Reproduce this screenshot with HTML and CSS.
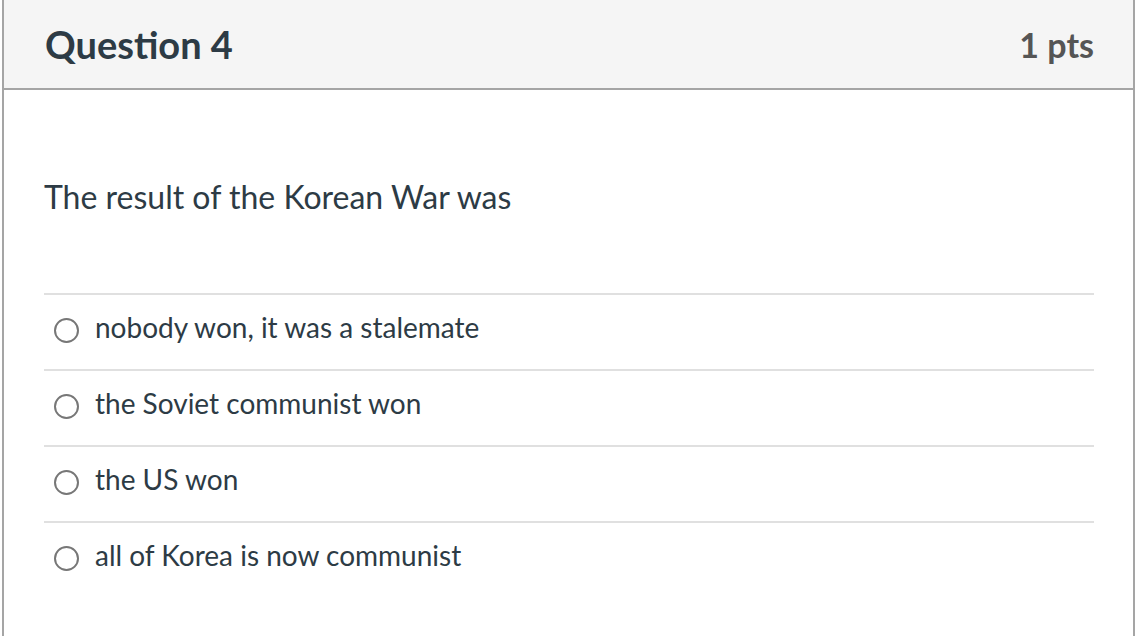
FILE: index.html
```html
<!DOCTYPE html>
<html>
<head>
<meta charset="utf-8">
<link rel="stylesheet" href="styles.css">
</head>
<body>
<div class="question">
  <div class="header">
    <span class="title">Question 4</span>
    <span class="pts">1 pts</span>
  </div>
  <div class="content">
    <div class="text">The result of the Korean War was</div>
    <div class="answers">
      <div class="answer"><span class="radio"></span><span class="label">nobody won, it was a stalemate</span></div>
      <div class="answer"><span class="radio"></span><span class="label">the Soviet communist won</span></div>
      <div class="answer"><span class="radio"></span><span class="label">the US won</span></div>
      <div class="answer"><span class="radio"></span><span class="label">all of Korea is now communist</span></div>
    </div>
  </div>
</div>
</body>
</html>
```
FILE: styles.css
```css
html, body {
  margin: 0;
  padding: 0;
  background: #fff;
  font-family: Lato, "Liberation Sans", sans-serif;
  color: #2d3b45;
}
.question {
  margin-left: 2px;
  width: 1133px;
  height: 636px;
  box-sizing: border-box;
  border-left: 2px solid #a5a5a5;
  border-right: 2px solid #a5a5a5;
  overflow: hidden;
}
.header {
  height: 88px;
  background: #f5f5f5;
  border-bottom: 2px solid #a5a5a5;
  display: flex;
  align-items: center;
  justify-content: space-between;
  padding: 0 39px 0 41px;
}
.title {
  font-weight: 700;
  font-size: 38px;
  color: #2d3b45;
}
.pts {
  font-weight: 700;
  font-size: 34px;
  color: #555;
}
.content {
  padding: 0 39px 0 40px;
}
.text {
  font-size: 32px;
  padding-top: 87px;
  height: 203px;
  box-sizing: border-box;
}
.answer {
  border-top: 2px solid #e0e0e0;
  height: 76px;
  box-sizing: border-box;
  display: flex;
  align-items: center;
  padding-left: 10px;
  padding-bottom: 4px;
}
.radio {
  width: 25px;
  height: 25px;
  border: 2px solid #777;
  border-radius: 50%;
  box-sizing: border-box;
  margin-right: 16px;
  flex: none;
}
.label {
  font-size: 28px;
  padding-bottom: 6px;
}
```
